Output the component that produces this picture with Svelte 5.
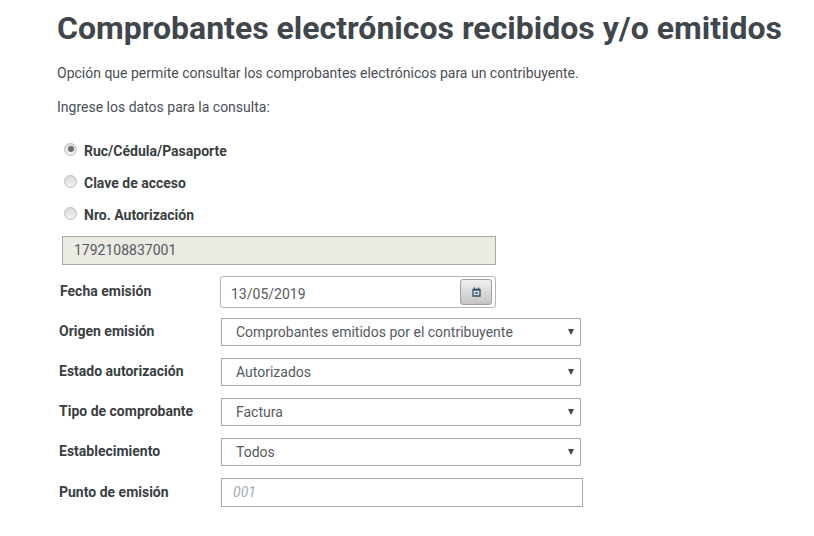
<script>
  const radios = [
    { label: 'Ruc/Cédula/Pasaporte', checked: true },
    { label: 'Clave de acceso', checked: false },
    { label: 'Nro. Autorización', checked: false }
  ];
  const selects = [
    { label: 'Origen emisión', value: 'Comprobantes emitidos por el contribuyente' },
    { label: 'Estado autorización', value: 'Autorizados' },
    { label: 'Tipo de comprobante', value: 'Factura' },
    { label: 'Establecimiento', value: 'Todos' }
  ];
</script>

<main class="page">
  <h1>Comprobantes electrónicos recibidos y/o emitidos</h1>
  <p class="intro">Opción que permite consultar los comprobantes electrónicos para un contribuyente.</p>
  <p class="intro second">Ingrese los datos para la consulta:</p>

  <div class="radios">
    {#each radios as r}
      <div class="radio-row">
        <span class="radio" class:checked={r.checked}></span>
        <span class="radio-label">{r.label}</span>
      </div>
    {/each}
  </div>

  <div class="id-box">1792108837001</div>

  <div class="row date-row">
    <span class="label">Fecha emisión</span>
    <div class="date">
      <span class="date-value">13/05/2019</span>
      <span class="cal">
        <svg width="9" height="10" viewBox="0 0 9 10">
          <path d="M1 2.5h7v6.5H1z" fill="none" stroke="#2b5568" stroke-width="1.3"/>
          <path d="M1 2h7v1.6H1z" fill="#2b5568"/>
          <path d="M2.5 0.5v2M6.5 0.5v2" stroke="#2b5568" stroke-width="1.2"/>
          <path d="M3.5 5h2v2h-2z" fill="#2b5568"/>
        </svg>
      </span>
    </div>
  </div>

  {#each selects as s}
    <div class="row select-row">
      <span class="label">{s.label}</span>
      <div class="select">
        <span>{s.value}</span>
        <span class="caret"></span>
      </div>
    </div>
  {/each}

  <div class="row point-row">
    <span class="label">Punto de emisión</span>
    <div class="input">001</div>
  </div>
</main>

<style>
  :global(body) {
    margin: 0;
    background: #fff;
    font-family: Roboto, sans-serif;
    color: #4a4f55;
  }
  .page {
    padding: 8px 0 0 57px;
    height: 528px;
    overflow: hidden;
  }
  h1 {
    margin: 0;
    font-size: 32px;
    line-height: 40px;
    font-weight: 700;
    color: #3f474d;
    white-space: nowrap;
  }
  .intro {
    margin: 17px 0 0;
    font-size: 14px;
    line-height: 16px;
  }
  .second {
    margin-top: 18px;
  }
  .radios {
    margin: 26px 0 0 7px;
    display: flex;
    flex-direction: column;
    gap: 12px;
  }
  .radio-row {
    display: flex;
    align-items: center;
    height: 20px;
  }
  .radio {
    width: 13px;
    height: 13px;
    box-sizing: border-box;
    border-radius: 50%;
    border: 1px solid #bdbdbd;
    background: linear-gradient(#d8d8d8, #f4f4f4);
    margin-right: 7px;
    position: relative;
    top: -2px;
  }
  .radio.checked::after {
    content: '';
    position: absolute;
    left: 2.5px;
    top: 2.5px;
    width: 6px;
    height: 6px;
    border-radius: 50%;
    background: #6e6e6e;
  }
  .radio-label {
    font-size: 14px;
    font-weight: 700;
    color: #3a3f42;
  }
  .id-box {
    margin: 11px 0 0 5px;
    width: 434px;
    height: 29px;
    box-sizing: border-box;
    border: 1px solid #a9a9a0;
    background: #ebebe4;
    padding-left: 11px;
    font-size: 14px;
    line-height: 27px;
    color: #555a60;
  }
  .row {
    display: flex;
    align-items: center;
    margin-left: 2px;
  }
  .label {
    width: 162px;
    font-size: 14px;
    font-weight: 700;
    color: #3a3f42;
    flex: none;
    position: relative;
    top: -1px;
  }
  .date-row {
    margin-top: 11px;
    height: 32px;
  }
  .date-row .label {
    width: 161px;
    left: 1px;
  }
  .date {
    width: 276px;
    height: 32px;
    box-sizing: border-box;
    border: 1px solid #b4b4b4;
    border-radius: 3px;
    padding: 0 3px 0 10px;
    font-size: 14px;
    display: flex;
    align-items: center;
    justify-content: space-between;
    color: #555a60;
  }
  .date-value {
    position: relative;
    top: 2px;
  }
  .cal {
    width: 32px;
    height: 26px;
    box-sizing: border-box;
    border: 1px solid #a0a0a0;
    border-radius: 3px;
    background: linear-gradient(#f0f0f0, #c4c4c4);
    display: flex;
    align-items: center;
    justify-content: center;
  }
  .select-row {
    margin-top: 12px;
    height: 28px;
  }
  .date-row + .select-row {
    margin-top: 10px;
  }
  .select {
    width: 360px;
    height: 28px;
    box-sizing: border-box;
    border: 1px solid #a9a9a9;
    padding: 0 6px 0 14px;
    font-size: 14px;
    display: flex;
    align-items: center;
    justify-content: space-between;
    color: #555a60;
  }
  .caret {
    width: 0;
    height: 0;
    border-left: 3px solid transparent;
    border-right: 3px solid transparent;
    border-top: 6px solid #444;
  }
  .point-row {
    margin-top: 12px;
    height: 29px;
  }
  .input {
    width: 362px;
    height: 29px;
    box-sizing: border-box;
    border: 1px solid #a9a9a9;
    padding-left: 11px;
    font-size: 14px;
    line-height: 27px;
    font-style: italic;
    color: #a4abb3;
  }
</style>
